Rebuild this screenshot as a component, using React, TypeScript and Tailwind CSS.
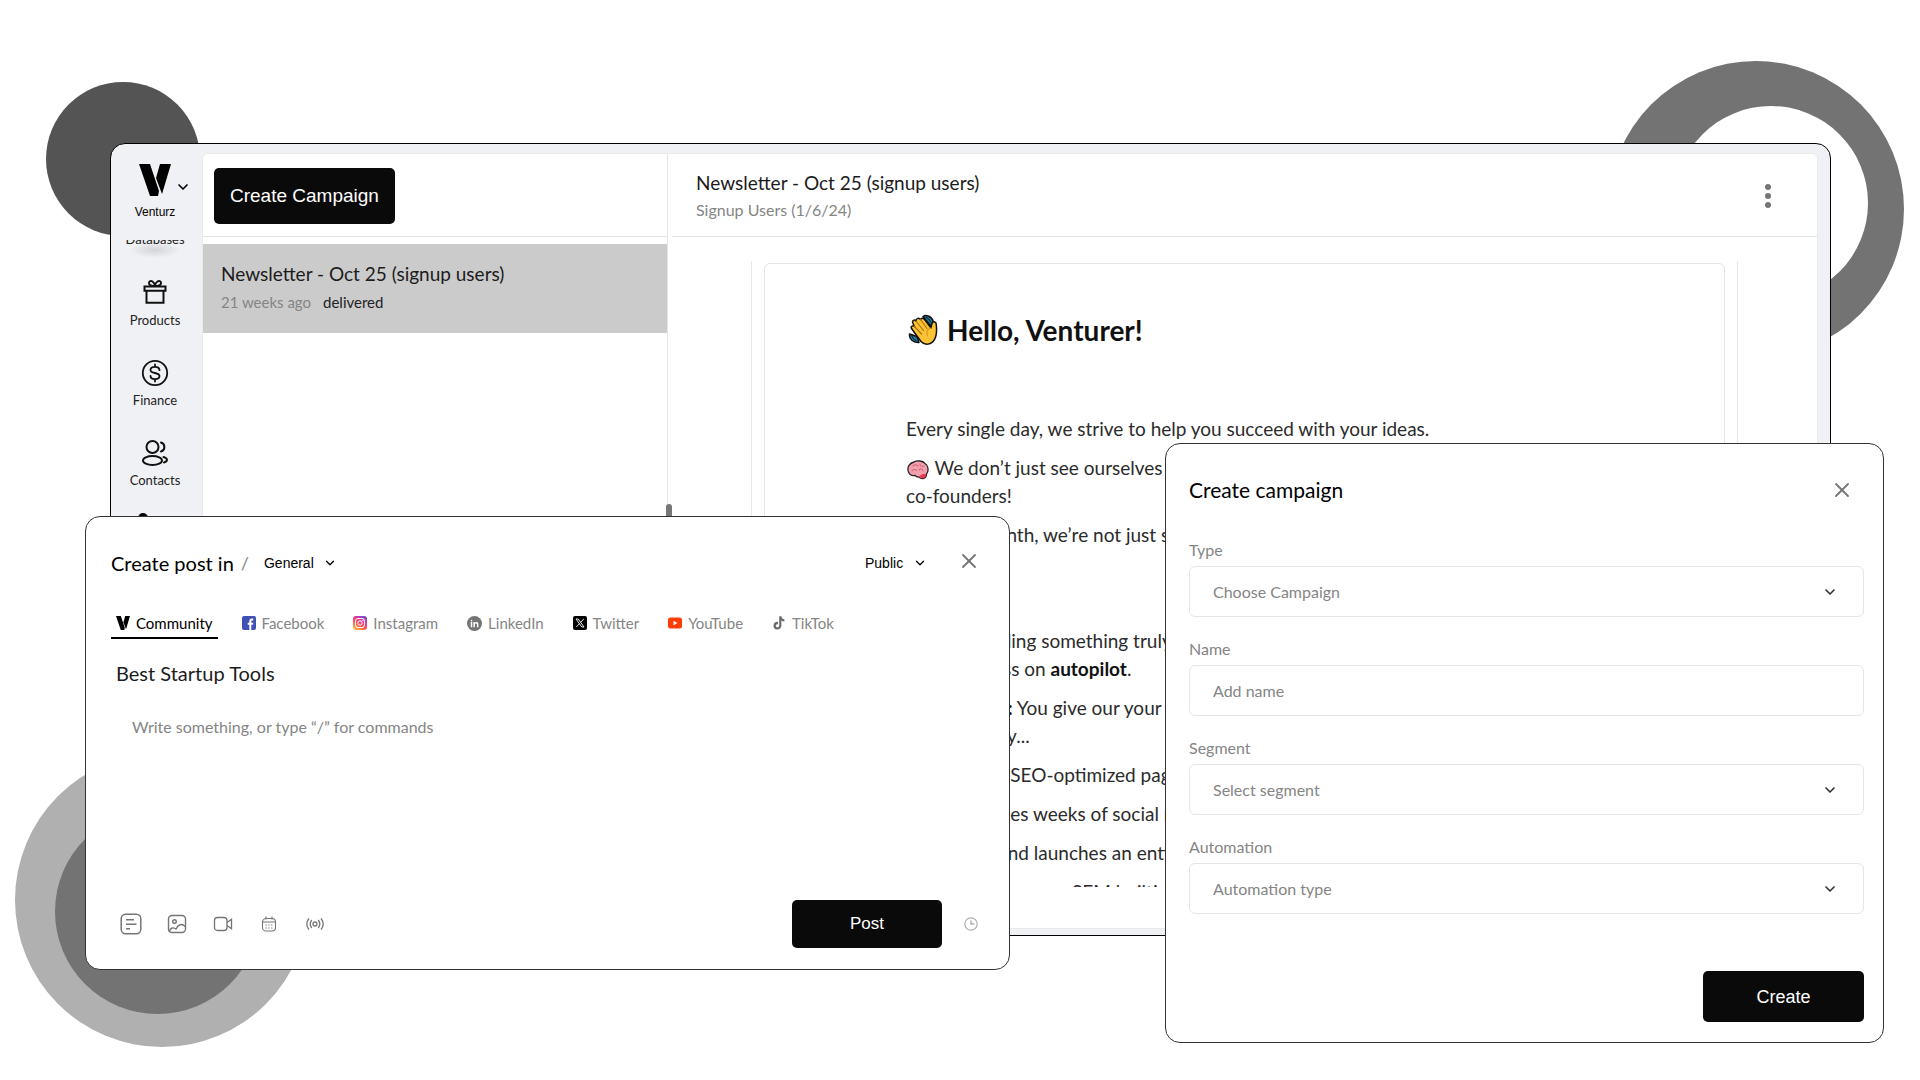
import React from "react";
import { ChevronDown, X } from "lucide-react";

const navItems = [
  { label: "Products", icon: GiftIcon },
  { label: "Finance", icon: DollarIcon },
  { label: "Contacts", icon: ContactsIcon },
];

const tabs = [
  { label: "Community", icon: VenturzMark, active: true },
  { label: "Facebook", icon: FacebookIcon },
  { label: "Instagram", icon: InstagramIcon },
  { label: "LinkedIn", icon: LinkedInIcon },
  { label: "Twitter", icon: TwitterIcon },
  { label: "YouTube", icon: YouTubeIcon },
  { label: "TikTok", icon: TikTokIcon },
];

const tools = [
  { label: "Article", icon: ArticleIcon },
  { label: "Image", icon: ImageIcon },
  { label: "Video", icon: VideoIcon },
  { label: "Event", icon: CalendarIcon },
  { label: "Live", icon: LiveIcon },
];

const fields = [
  { id: "type", label: "Type", placeholder: "Choose Campaign", select: true },
  { id: "name", label: "Name", placeholder: "Add name", select: false },
  { id: "segment", label: "Segment", placeholder: "Select segment", select: true },
  { id: "automation", label: "Automation", placeholder: "Automation type", select: true },
];

function VenturzMark({ className = "w-[14px] h-[14px]" }: { className?: string }) {
  return (
    <svg viewBox="0 0 32 32" className={className} fill="#000" preserveAspectRatio="none">
      <path d="M0 0h11l9 27-1 5h-8z" />
      <path d="M21 0h11L23 30 17 14z" />
    </svg>
  );
}

function GiftIcon() {
  return (
    <svg viewBox="0 0 26 26" className="w-[26px] h-[26px]" fill="none" stroke="#111" strokeWidth="2">
      <path d="M2.5 7.5h21v4.200h-21zM4.500 11.700v12h17v-12" />
      <path d="M13 7C10 7 7 6 7 4s2-2.600 3.500-1.500S13 5 13 7c0-2 1-3.500 2.500-4.500S19 2 19 4s-3 3-6 3z" />
    </svg>
  );
}

function DollarIcon() {
  return (
    <svg viewBox="0 0 28 28" className="w-[28px] h-[28px]" fill="none" stroke="#111" strokeWidth="1.800" strokeLinecap="round">
      <circle cx="14" cy="14" r="12.200" />
      <path d="M14 5.500v2.300M14 20.200v2.300M18.500 11.200c0-2-1.800-3.400-4.500-3.400s-4.500 1.200-4.500 3.100c0 4.300 9 1.900 9 6.200 0 1.900-1.800 3.100-4.500 3.100s-4.500-1.400-4.500-3.400" />
    </svg>
  );
}

function ContactsIcon() {
  return (
    <svg viewBox="0 0 28 28" className="w-[28px] h-[28px]" fill="none" stroke="#111" strokeWidth="2" strokeLinecap="round">
      <circle cx="11.500" cy="8" r="6" />
      <ellipse cx="11.500" cy="21.500" rx="9.500" ry="4.500" />
      <path d="M20 3.500c4.500 1.300 4.500 7.700 0 9M22.500 18c4.500 1.200 4.500 4.300.5 5.500" />
    </svg>
  );
}

function FacebookIcon() {
  return (
    <svg viewBox="0 0 14 14" className="w-[14px] h-[14px]">
      <rect width="14" height="14" rx="2" fill="#3f51b5" />
      <path d="M7.300 14V8.800H5.700V6.800h1.600V5.300c0-1.700 1-2.700 2.600-2.700h1.300v2h-1c-.7 0-.9.300-.9.900v1.300h1.900l-.3 2H9.300V14z" fill="#fff" />
    </svg>
  );
}

function InstagramIcon() {
  return (
    <svg viewBox="0 0 14 14" className="w-[14px] h-[14px]">
      <defs>
        <linearGradient id="insta" x1="0.200" y1="1" x2="0.800" y2="0">
          <stop offset="0" stopColor="#ffc046" />
          <stop offset="0.400" stopColor="#ff4d55" />
          <stop offset="0.700" stopColor="#d936a0" />
          <stop offset="1" stopColor="#6a4fd8" />
        </linearGradient>
      </defs>
      <rect width="14" height="14" rx="3" fill="url(#insta)" />
      <g fill="none" stroke="#fff">
        <rect x="2.500" y="2.500" width="9" height="9" rx="2.500" />
        <circle cx="7" cy="7" r="2.200" />
      </g>
      <circle cx="9.800" cy="4.300" r="0.600" fill="#fff" />
    </svg>
  );
}

function LinkedInIcon() {
  return (
    <svg viewBox="0 0 16 16" className="w-[15px] h-[15px]">
      <circle cx="8" cy="8" r="8" fill="#757575" />
      <path d="M4 6.500h1.600V12H4zM6.800 6.500h1.500v.8c.8-1.400 3.900-1.300 3.900 1.400V12h-1.600V9.200c0-1.800-2.200-1.600-2.200 0V12H6.800z" fill="#fff" />
      <circle cx="4.800" cy="4.900" r="0.900" fill="#fff" />
    </svg>
  );
}

function TwitterIcon() {
  return (
    <svg viewBox="0 0 14 14" className="w-[14px] h-[14px]">
      <rect width="14" height="14" rx="2" fill="#000" />
      <path d="M3 3h2.200L11 11H8.800zM10.700 3 7.700 6.400M6.400 7.700 3.300 11" fill="none" stroke="#fff" strokeWidth="0.900" />
    </svg>
  );
}

function YouTubeIcon() {
  return (
    <svg viewBox="0 0 14 14" className="w-[14px] h-[14px]">
      <rect y="1.500" width="14" height="11" rx="2.500" fill="#ff3d00" />
      <path d="m5.500 4.700 4 2.300-4 2.300z" fill="#fff" />
    </svg>
  );
}

function TikTokIcon() {
  return (
    <svg viewBox="0 0 14 14" className="w-[14px] h-[14px]">
      <path d="M7.200.3h2.200c.2 1.700 1.200 2.900 3 3v2.200c-1.200 0-2.200-.4-3-1v5c0 5.500-7.900 5.300-7.900.2C1.500 7 3.700 5.500 6.100 5.900v2.300c-1.300-.3-2.300.4-2.300 1.500 0 2.200 3.400 2.200 3.400-.3z" fill="#6b6b6b" />
    </svg>
  );
}

function ArticleIcon() {
  return (
    <svg viewBox="0 0 22 22" className="w-[22px] h-[22px]" fill="none" stroke="#757575" strokeWidth="1.500">
      <rect x="1.200" y="1.200" width="19.600" height="19.600" rx="4.500" />
      <path d="M6 6.800h8M6 11.200h10.500M6 15.700h4" />
    </svg>
  );
}

function ImageIcon() {
  return (
    <svg viewBox="0 0 20 20" className="w-[20px] h-[20px]" fill="none" stroke="#757575" strokeWidth="1.400">
      <rect x="1.500" y="1.500" width="17" height="17" rx="3.500" />
      <circle cx="7.500" cy="7.500" r="1.800" />
      <path d="M2 17.500c2-4 4-4.500 7-2.500 2.500-4.500 5-6 9.300-2.500" />
    </svg>
  );
}

function VideoIcon() {
  return (
    <svg viewBox="0 0 20 20" className="w-[20px] h-[20px]" fill="none" stroke="#757575" strokeWidth="1.300">
      <rect x="1.500" y="3.500" width="12.500" height="13" rx="3" />
      <path d="m14 8.500 4.500-3.200v9.400L14 11.500" />
    </svg>
  );
}

function CalendarIcon() {
  return (
    <svg viewBox="0 0 16 16" className="w-[16px] h-[16px]" fill="none" stroke="#757575" strokeWidth="1.100">
      <rect x="1.500" y="2.500" width="13" height="12.500" rx="3.500" />
      <path d="M1.500 6h13M5 .5v3M11 .5v3" />
      <path d="M4.500 9h7.500M4.500 12h7.500" strokeDasharray="1.300 1.500" />
    </svg>
  );
}

function LiveIcon() {
  return (
    <svg viewBox="0 0 18 18" className="w-[18px] h-[18px]" fill="none" stroke="#757575" strokeWidth="1.300">
      <circle cx="9" cy="9" r="2" />
      <path d="M5.800 5c-2 2.500-2 5.500 0 8M12.200 5c2 2.500 2 5.500 0 8M3 3.500c-2.800 3.500-2.800 7.500 0 11M15 3.500c2.800 3.500 2.800 7.500 0 11" />
    </svg>
  );
}

function ClockIcon() {
  return (
    <svg viewBox="0 0 14 14" className="w-[14px] h-[14px]" fill="none" stroke="#b0b0b0" strokeWidth="1.200">
      <circle cx="7" cy="7" r="6.200" />
      <path d="M7 3.500V7h3.500" strokeWidth="1.500" />
    </svg>
  );
}

function WaveEmoji() {
  return (
    <svg viewBox="0 0 30 32" className="w-[30px] h-[32px]" strokeLinecap="round" strokeLinejoin="round">
      <path d="M15 2.500C18 .5 24 2 25.500 8l-3 4zM1.500 20c-.5 5 3.500 9 9.500 8.500l-2-6z" fill="#21789b" stroke="#111" strokeWidth="1.500" />
      <path d="M18 3.500c2 .5 3.500 2 4.500 4.500M4 21c0 2.500 1.500 4.500 4 5.500" fill="none" stroke="#111" />
      <path d="M3.500 14.500c-1-2 1.500-3.500 3-2L4.800 9C3.800 6.500 6.500 5 8 7c0-3 3-3.500 4.500-1.500 1-2 3-1.500 4.500.5l6 8c.5-2 .3-4 1.500-5.500s3.500-.5 3.700 1.500c.8 7 .8 12-2 16-3.200 5-9.700 5.500-13.200 1.500z" fill="#fcc335" stroke="#111" strokeWidth="1.500" />
      <path d="m8 7 7.500 9.500M12.500 5.500l6.500 9M6 12l7.500 8" fill="none" stroke="#a9740d" strokeWidth="1.200" />
      <path d="M23 14c-4 1-5 4.500-3.500 8" fill="none" stroke="#d99a20" strokeWidth="1.200" />
    </svg>
  );
}

function BrainEmoji() {
  return (
    <svg viewBox="0 0 22 20" className="w-[22px] h-[20px]" strokeLinecap="round">
      <path d="M1.500 12C-.5 6.500 3 3 7 2c3-2 9-1 10.500 1C21.500 5.500 22 11 19.500 14c0 5-5 5.500-7.500 3-2 .5-3-.5-4-1.500-3 .5-5.500-1-6.500-3.500z" fill="#f3a0ae" stroke="#292022" strokeWidth="1.300" />
      <path d="M12 17c2.500 2.500 7 1.500 7.200-2.500-3-1-5.200 0-7.200 2.500z" fill="#e9364c" />
      <path d="M6 6c2-2 4-1 5 0M5 11c1-2 3-2 4.500-.5M13 4c0 2 2 3 4 2M12 10c2-2 4-1 4 1" fill="none" stroke="#cf6b7d" strokeWidth="1.100" />
    </svg>
  );
}

function Backdrop() {
  return (
    <div aria-hidden="true">
      <div className="absolute left-[46px] top-[82px] size-[154px] rounded-full bg-[#545454]" />
      <div className="absolute right-4 top-[61px] size-[296px] rounded-full bg-[#737373]">
        <div className="absolute left-[66px] top-[45px] size-[194px] rounded-full bg-white" />
      </div>
      <div className="absolute left-[15px] top-[753px] size-[294px] rounded-full bg-[#b0b0b0]">
        <div className="absolute left-[40px] top-[56px] size-[205px] rounded-full bg-[#737373]" />
      </div>
    </div>
  );
}

function Sidebar() {
  return (
    <nav className="w-[91px] shrink-0 pr-[3px] flex flex-col items-center text-[13px] text-[#222]">
      <button className="relative pt-5 flex flex-col items-center text-xs text-black font-['Liberation_Sans',sans-serif]">
        <VenturzMark className="w-[32px] h-[32px]" />
        <ChevronDown className="absolute left-full top-[35px] w-4 h-4" strokeWidth={2.5} />
        <span className="mt-2 leading-4">Venturz</span>
      </button>
      <a href="#" className="mt-[20px] h-[6px] overflow-hidden flex flex-col justify-end leading-[14px]">
        <span>Databases</span>
      </a>
      <div className="-mt-1 w-[52px] h-4 rounded-[50%] bg-radial from-black/12 to-transparent to-70%" />
      <div className="mt-[21px] flex flex-col gap-[31px]">
        {navItems.map((item) => {
          const Icon = item.icon;
          return (
            <a key={item.label} href="#" className="h-[49px] flex flex-col items-center justify-between">
              <Icon />
              <span className="leading-4">{item.label}</span>
            </a>
          );
        })}
        <span className="-mt-[6px] ml-2 size-[10px] rounded-full bg-black" />
      </div>
    </nav>
  );
}

function CampaignList() {
  return (
    <section className="w-[465px] shrink-0 border-r border-[#e5e5e5]">
      <div className="h-[83px] px-[11px] pt-[14px] border-b border-[#e5e5e5]">
        <button className="h-14 px-4 rounded-[5px] bg-[#0a0a0a] text-white text-[19px] font-['Liberation_Sans',sans-serif]">
          Create Campaign
        </button>
      </div>
      <a href="#" className="mt-[7px] h-[89px] px-[18px] pt-4 block bg-[#cbcbcb]">
        <h2 className="text-[19px] leading-[28px] text-[#1c1c1c]">Newsletter - Oct 25 (signup users)</h2>
        <p className="flex gap-3 text-[15px] leading-[28px] text-[#222]">
          <span className="text-[#858585]">21 weeks ago</span>
          <span>delivered</span>
        </p>
      </a>
    </section>
  );
}

function CampaignPreview() {
  return (
    <section className="grow min-w-0 pl-1 relative flex flex-col">
      <span className="absolute -left-[2px] top-[350px] h-14 w-[6px] rounded-full bg-[#777]" />
      <header className="h-[83px] shrink-0 pt-1 pl-6 pr-[39px] flex items-center justify-between border-b border-[#e5e5e5]">
        <div>
          <h2 className="text-[19px] leading-[26px] text-[#1c1c1c]">Newsletter - Oct 25 (signup users)</h2>
          <p className="text-base leading-[28px] text-[#858585]">Signup Users (1/6/24)</p>
        </div>
        <button aria-label="More" className="w-5 pb-[2px] flex flex-col items-center gap-[3px]">
          <span className="size-[6px] rounded-full bg-[#757575]" />
          <span className="size-[6px] rounded-full bg-[#757575]" />
          <span className="size-[6px] rounded-full bg-[#757575]" />
        </button>
      </header>
      <div className="mt-6 ml-[79px] mr-[79px] h-[626px] px-3 pt-[2px] border-x border-[#e9e9e9] overflow-hidden">
        <article className="pl-[141px] pt-12 h-[700px] border border-[#e5e5e5] rounded-md text-[19px] leading-[28px] text-[#2b2b2b] whitespace-nowrap">
          <h1 className="flex items-center gap-[9px] pl-[2px] text-[28px] leading-9 font-bold text-[#111]">
            <WaveEmoji />
            Hello, Venturer!
          </h1>
          <div className="mt-[67px] flex flex-col gap-[11px]">
            <p>Every single day, we strive to help you succeed with your ideas.</p>
            <p>
              <span className="inline-flex px-[1px] align-middle">
                <BrainEmoji />
              </span>{" "}
              We don’t just see ourselves as a platform, we’re your
              <br />
              co-founders!
            </p>
            <p>And this month, we’re not just shipping features.</p>
          </div>
          <div className="mt-[78px] flex flex-col gap-[11px]">
            <p>
              We are building something truly special that puts
              <br />
              your business on <b className="text-[#111]">autopilot</b>.
            </p>
            <p>
              <b className="text-[#111]">Your Agents:</b> You give our your idea and they
              <br />
              shares all day...
            </p>
            <p>→ Builds an SEO-optimized page</p>
            <p>→ It schedules weeks of social media</p>
            <p>→ Creates and launches an entire store</p>
            <p className="pl-[166px]">SEM builtin</p>
          </div>
        </article>
      </div>
    </section>
  );
}

function SmallSelect({ label, value }: { label: string; value: string }) {
  return (
    <span className="flex items-center gap-[9px]">
      <select aria-label={label} className="appearance-none text-sm font-['Liberation_Sans',sans-serif] text-black">
        <option>{value}</option>
      </select>
      <ChevronDown className="w-[14px] h-[14px] pointer-events-none" strokeWidth={2.2} />
    </span>
  );
}

function CreatePost() {
  return (
    <section className="absolute left-[85px] top-[516px] w-[925px] max-w-full h-[454px] pl-[25px] pr-[26px] pt-[30px] pb-[21px] flex flex-col bg-white border border-[#333] rounded-[15px]">
      <header className="h-8 flex items-center">
        <h2 className="text-xl text-black">Create post in</h2>
        <span className="mx-[7px] text-lg text-[#858585]">/</span>
        <span className="ml-2">
          <SmallSelect label="Channel" value="General" />
        </span>
        <div className="ml-auto mr-[2px] flex items-center gap-[30px]">
          <SmallSelect label="Visibility" value="Public" />
          <button aria-label="Close" className="pb-1">
            <X className="w-6 h-6 text-[#757575]" strokeWidth={1.8} />
          </button>
        </div>
      </header>
      <div className="mt-[30px] flex gap-[19px]">
        {tabs.map((tab) => {
          const Icon = tab.icon;
          return (
            <button
              key={tab.label}
              className={`h-[30px] px-[5px] flex items-center gap-[6px] text-[15px] border-b-2 ${tab.active ? "border-black text-black" : "border-transparent text-[#858585]"}`}
            >
              <Icon />
              {tab.label}
            </button>
          );
        })}
      </div>
      <input
        aria-label="Title"
        defaultValue="Best Startup Tools"
        className="mt-[18px] px-[5px] h-8 text-xl text-[#1c1c1c] outline-none"
      />
      <textarea
        aria-label="Post"
        placeholder="Write something, or type “/” for commands"
        className="mt-[22px] px-[21px] py-1 grow resize-none text-base text-black placeholder:text-[#858585] outline-none"
      />
      <footer className="pl-[9px] pr-[5px] flex items-center justify-between">
        <div className="flex items-center gap-6">
          {tools.map((tool) => {
            const Icon = tool.icon;
            return (
              <button key={tool.label} aria-label={tool.label} className="w-[22px] flex justify-center">
                <Icon />
              </button>
            );
          })}
        </div>
        <div className="flex items-center gap-[22px]">
          <button className="w-[150px] h-12 rounded-[5px] bg-[#0a0a0a] text-white text-[17px] font-['Liberation_Sans',sans-serif]">
            Post
          </button>
          <button aria-label="Schedule">
            <ClockIcon />
          </button>
        </div>
      </footer>
    </section>
  );
}

function CreateCampaign() {
  return (
    <section className="absolute right-9 top-[443px] w-[719px] max-w-full pl-[23px] pr-[19px] pt-[31px] pb-[20px] bg-white border border-[#333] rounded-[15px]">
      <header className="h-[30px] flex items-center justify-between pr-[10px]">
        <h2 className="text-[21px] text-black">Create campaign</h2>
        <button aria-label="Close">
          <X className="w-6 h-6 text-[#757575]" strokeWidth={1.8} />
        </button>
      </header>
      <form className="mt-[33px] flex flex-col gap-[20px]" onSubmit={(e) => e.preventDefault()}>
        {fields.map((field) => (
          <div key={field.id} className="flex flex-col gap-1">
            <label htmlFor={field.id} className="text-base leading-6 text-[#858585]">
              {field.label}
            </label>
            {field.select ? (
              <div className="relative">
                <select
                  id={field.id}
                  className="w-full h-[51px] px-[23px] appearance-none bg-white border border-[#e5e5e5] rounded-md text-base text-[#858585]"
                >
                  <option>{field.placeholder}</option>
                </select>
                <ChevronDown className="absolute right-[26px] top-[18px] w-4 h-4 text-[#333] pointer-events-none" strokeWidth={2.5} />
              </div>
            ) : (
              <input
                id={field.id}
                placeholder={field.placeholder}
                className="w-full h-[51px] px-[23px] border border-[#e5e5e5] rounded-md text-base placeholder:text-[#858585]"
              />
            )}
          </div>
        ))}
        <button className="mt-[37px] self-end w-[161px] h-[51px] rounded-[5px] bg-[#0a0a0a] text-white text-lg font-['Liberation_Sans',sans-serif]">
          Create
        </button>
      </form>
    </section>
  );
}

export default function App() {
  return (
    <div className="relative min-h-screen overflow-hidden bg-white pt-[143px] pl-[110px] pr-[89px] font-[Lato,sans-serif]">
      <Backdrop />
      <main className="relative h-[793px] flex bg-[#f0f1f4] border border-black rounded-[15px] pt-[9px] pr-3 pb-[6px] overflow-hidden">
        <div className="flex -mt-[9px]">
          <Sidebar />
        </div>
        <div className="grow min-w-0 flex bg-white border border-[#e9ebeb] rounded-md overflow-hidden">
          <CampaignList />
          <CampaignPreview />
        </div>
      </main>
      <CreatePost />
      <CreateCampaign />
    </div>
  );
}
